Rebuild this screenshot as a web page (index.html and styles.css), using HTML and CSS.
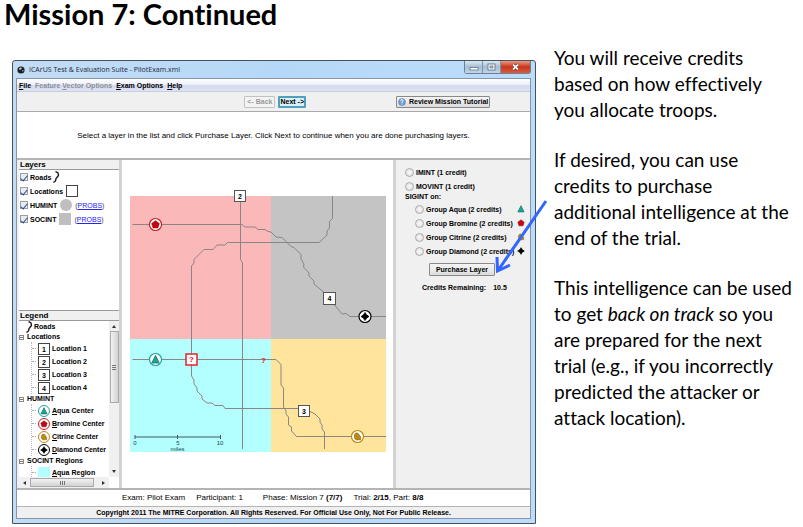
FILE: index.html
```html
<!DOCTYPE html>
<html lang="en">
<head>
<meta charset="utf-8">
<title>Mission 7: Continued</title>
<link rel="stylesheet" href="styles.css">
</head>
<body>
<svg class="defs" aria-hidden="true">
  <symbol id="aqua" viewBox="-6 -6 12 12"><path d="M0-4 3.700 3.500H-3.700Z" fill="#1aa69c" stroke="#14695f" stroke-width=".8"/></symbol>
  <symbol id="bromine" viewBox="-6 -6 12 12"><path d="M0-3.800 3.800-1 2.400 3.400H-2.400L-3.800-1Z" fill="#c40812" stroke="#8b0008" stroke-width=".6"/></symbol>
  <symbol id="citrine" viewBox="-6 -6 12 12"><path d="M-2.800-2.200C-2-4 1-4 1.500-1.500 3-.5 3.800 1 3 3.200L-1 3.400C-3 3-3.600 0-2.800-2.200Z" fill="#bd8a10" stroke="#7d5908" stroke-width=".6"/></symbol>
  <symbol id="diamond" viewBox="-6 -6 12 12"><path d="M0-4 1.600-1.600 4 0 1.600 1.600 0 4-1.600 1.600-4 0-1.600-1.600Z" fill="#000" stroke="#000" stroke-width=".8"/></symbol>
  <symbol id="road" viewBox="0 0 8 12"><path d="M3.500.5 6 2 6.500 4.500 4 7.500 3.500 10 1.500 11.500" fill="none" stroke="#111" stroke-width="1.300"/></symbol>
</svg>
<main class="slide">
  <h1 class="slide-title">Mission 7: Continued</h1>

  <section class="window">
    <header class="titlebar">
      <svg class="app-icon" viewBox="0 0 8 8"><circle cx="4" cy="4" r="3.600" fill="#1b1f25"/><path d="M2 2.500Q3.500 1 5 2L4 3.500 2.500 4ZM5 4.500 6.500 4 6 6Z" fill="#b9c8d6"/></svg>
      <span class="app-title">ICArUS Test &amp; Evaluation Suite - PilotExam.xml</span>
      <div class="window-buttons">
        <button class="win-btn" aria-label="Minimize"><svg viewBox="0 0 16 12"><rect x="4.500" y="6.500" width="8" height="2.500" fill="#fff" stroke="#59687a" stroke-width=".7"/></svg></button>
        <button class="win-btn" aria-label="Maximize"><svg viewBox="0 0 16 12"><rect x="4.500" y="3" width="7" height="6" fill="#fff" stroke="#59687a" stroke-width=".8"/><rect x="6.500" y="5" width="3" height="2" fill="#b5cbe0" stroke="#59687a" stroke-width=".7"/></svg></button>
        <button class="win-btn close" aria-label="Close"><svg viewBox="0 0 30 12"><path d="M12.500 3.500 17.500 8.500M17.500 3.500 12.500 8.500" stroke="#6b3030" stroke-width="3"/><path d="M12.500 3.500 17.500 8.500M17.500 3.500 12.500 8.500" stroke="#fff" stroke-width="1.800"/></svg></button>
      </div>
    </header>

    <div class="client">
      <nav class="menubar">
        <button><u>F</u>ile</button>
        <button disabled>Feature <u>V</u>ector Options</button>
        <button><u>E</u>xam Options</button>
        <button><u>H</u>elp</button>
      </nav>
      <div class="toolbar">
        <div class="steps">
          <button class="btn" disabled>&lt;- Back</button>
          <button class="btn next">Next -&gt;</button>
        </div>
        <button class="btn review"><svg viewBox="0 0 8 8"><circle cx="4" cy="4" r="3.500" fill="#6f9fd4" stroke="#4576b0" stroke-width=".5"/><path d="M2.800 3.100Q3-.1 5.200 2.300 5 3.500 4 4V5M4 5.700V6.500" fill="none" stroke="#fff" stroke-width=".9"/></svg>Review Mission Tutorial</button>
      </div>
      <p class="message">Select a layer in the list and click Purchase Layer. Click Next to continue when you are done purchasing layers.</p>

      <div class="workspace">
        <aside class="sidebar">
          <section class="layers">
            <h2>Layers</h2>
            <div class="layer"><label><input type="checkbox" checked>Roads</label><svg class="road-key"><use href="#road"/></svg></div>
            <div class="layer"><label><input type="checkbox" checked>Locations</label><i class="key outline"></i></div>
            <div class="layer"><label><input type="checkbox" checked>HUMINT</label><i class="key round"></i><span class="probs">(<a href="#humint">PROBS</a>)</span></div>
            <div class="layer"><label><input type="checkbox" checked>SOCINT</label><i class="key"></i><span class="probs">(<a href="#socint">PROBS</a>)</span></div>
          </section>
          <section class="legend">
            <h2>Legend</h2>
            <div class="legend-body">
              <ul class="tree">
                <li class="top-leaf"><svg class="road-key"><use href="#road"/></svg>Roads</li>
                <li><button class="toggle" aria-label="Collapse Locations"></button>Locations
                  <ul>
                    <li><b class="num">1</b>Location 1</li>
                    <li><b class="num">2</b>Location 2</li>
                    <li><b class="num">3</b>Location 3</li>
                    <li><b class="num">4</b>Location 4</li>
                  </ul>
                </li>
                <li><button class="toggle" aria-label="Collapse HUMINT"></button>HUMINT
                  <ul>
                    <li><svg class="center aqua"><use href="#aqua"/></svg><span><u>A</u>qua Center</span></li>
                    <li><svg class="center bromine"><use href="#bromine"/></svg><span><u>B</u>romine Center</span></li>
                    <li><svg class="center citrine"><use href="#citrine"/></svg><span><u>C</u>itrine Center</span></li>
                    <li><svg class="center diamond"><use href="#diamond"/></svg><span><u>D</u>iamond Center</span></li>
                  </ul>
                </li>
                <li><button class="toggle" aria-label="Collapse SOCINT Regions"></button>SOCINT Regions
                  <ul>
                    <li><i class="swatch"></i><span><u>A</u>qua Region</span></li>
                  </ul>
                </li>
              </ul>
              <div class="vscroll"><i class="arrow up"></i><i class="thumb"></i><i class="arrow down"></i></div>
              <div class="hscroll"><i class="arrow left"></i><i class="thumb"></i><i class="arrow right"></i></div>
            </div>
          </section>
        </aside>

        <svg class="map" viewBox="122 160 271 328" role="img" aria-label="Mission map">
          <rect x="130" y="196" width="141" height="143" fill="#fbb8b9"/>
          <rect x="271" y="196" width="115" height="143" fill="#c4c4c4"/>
          <rect x="130" y="339" width="141" height="113" fill="#b3ffff"/>
          <rect x="271" y="339" width="115" height="113" fill="#ffe49c"/>
          <g class="roads">
            <path d="M132.500 224.500H242L245 227H255L258 229.500H265L268 231.500 271 232 276 237 282 237.500 291 246.500 294 247.500 301 254.500V259L304 264 303.500 267 309 273V276L314 281V284L324 292.500 329 298 342 314 346 313.500 350 316.500H386"/>
            <path d="M332.500 196V218.500L329.500 221.500V228L327 231V235L319 242.500H227.500L225 245H217L213 249.500H204L194 259.500V263L191.500 266V376L194 380V384L197 388V391L202 396V399L207 403H212L215 405.500H223L225 408.500H304L311 412 315 414 320 419V422L322 425V429L324.500 432V449"/>
            <path d="M240.500 196V259.500L242.500 263V449"/>
            <path d="M132.500 359.500H276L281 364.500V385L283.500 388V407L286 411V414L288.500 417V425L291.500 427V431L296.500 436.500H386"/>
            <path class="scale" d="M135 437H220.500M135 435V439M177.500 435V439M220.500 435V439"/>
          </g>
          <g class="scale-text">
            <text x="135" y="445">0</text><text x="178" y="445">5</text><text x="220" y="445">10</text><text x="177.500" y="451">miles</text>
          </g>
          <g class="markers">
            <rect x="234.500" y="190.500" width="11" height="11"/><text x="240" y="199">2</text>
            <rect x="323.500" y="292.500" width="12" height="12"/><text x="329.500" y="301">4</text>
            <rect x="298.500" y="405.500" width="11" height="11"/><text x="304" y="414">3</text>
          </g>
          <g class="markers unknown">
            <rect x="186" y="354" width="11" height="11"/><text x="191.500" y="362">?</text>
            <text x="263.500" y="363">?</text>
          </g>
          <g class="centers">
            <circle cx="155.500" cy="224.500" r="6" stroke="#c4202a"/><use href="#bromine" x="149.500" y="218.500" width="12" height="12"/>
            <circle cx="365" cy="316.500" r="6" stroke="#000"/><use href="#diamond" x="359" y="310.500" width="12" height="12"/>
            <circle cx="155.500" cy="359.500" r="6" stroke="#1aa6a0"/><use href="#aqua" x="149.500" y="353.500" width="12" height="12"/>
            <circle cx="357.500" cy="436.500" r="6" stroke="#bd8a10"/><use href="#citrine" x="351.500" y="430.500" width="12" height="12"/>
          </g>
        </svg>

        <aside class="purchase">
          <label><input type="radio" name="layer">IMINT (1 credit)</label>
          <label><input type="radio" name="layer">MOVINT (1 credit)</label>
          <fieldset>
            <legend>SIGINT on:</legend>
            <label><input type="radio" name="layer">Group Aqua (2 credits)<svg><use href="#aqua"/></svg></label>
            <label><input type="radio" name="layer">Group Bromine (2 credits)<svg><use href="#bromine"/></svg></label>
            <label><input type="radio" name="layer">Group Citrine (2 credits)<svg><use href="#citrine"/></svg></label>
            <label><input type="radio" name="layer">Group Diamond (2 credits)<svg><use href="#diamond"/></svg></label>
          </fieldset>
          <button class="btn buy">Purchase Layer</button>
          <p class="credits"><span>Credits Remaining:</span><span>10.5</span></p>
          <svg class="pointer" viewBox="0 0 56 78" aria-hidden="true"><path d="M53 4 6 72M4 60 4.500 74 17 68" fill="none" stroke="#3366ff" stroke-width="3"/></svg>
        </aside>
      </div>

      <div class="status">
        <span>Exam: Pilot Exam</span><span>Participant: 1</span><span class="phase">Phase: Mission 7 <b>(7/7)</b></span><span>Trial: <b>2/15</b>, Part: <b>8/8</b></span>
      </div>
      <footer class="copyright">Copyright 2011 The MITRE Corporation. All Rights Reserved. For Official Use Only, Not For Public Release.</footer>
    </div>
  </section>

  <section class="notes">
    <p>You will receive credits<br>based on how effectively<br>you allocate troops.</p>
    <p>If desired, you can use<br>credits to purchase<br>additional intelligence at the<br>end of the trial.</p>
    <p>This intelligence can be used<br>to get <em>back on track</em> so you<br>are prepared for the next<br>trial (e.g., if you incorrectly<br>predicted the attacker or<br>attack location).</p>
  </section>
</main>
</body>
</html>
```
FILE: styles.css
```css
* { box-sizing: border-box; }

body {
  margin: 0;
  background: #fff;
  color: #000;
  font-family: "Liberation Sans", Arial, sans-serif;
}

h1, h2, p, ul, fieldset, legend { margin: 0; padding: 0; border: 0; }
ul { list-style: none; }
button { font: inherit; color: inherit; padding: 0; border: 0; background: none; }
i { display: block; }
.defs { position: absolute; width: 0; height: 0; }

.slide {
  display: grid;
  grid-template-columns: minmax(0, 1fr) 249px;
  column-gap: 18px;
  align-items: start;
  padding-left: 12px;
  font-variant-ligatures: none;
}

.slide-title {
  grid-column: 1 / -1;
  height: 60px;
  margin-left: -8px;
  font-family: Lato, sans-serif;
  font-size: 29px;
  line-height: 28px;
}

/* Application window */
.window {
  font-size: 7px;
  font-weight: bold;
  padding: 0 4px 4px 3px;
  border: 1px solid #47525f;
  border-radius: 3px 3px 0 0;
  background: linear-gradient(90deg, #c3dcf5, #b6d8f8 50%, #bcdcfb);
}

.titlebar {
  display: flex;
  align-items: center;
  gap: 4px;
  height: 17px;
  padding-left: 1px;
}
.app-icon { width: 8px; height: 8px; }
.app-title { flex: 1; font: 7px/12px "Open Sans", sans-serif; color: #1b2836; }
.window-buttons {
  display: flex;
  align-self: flex-start;
  border: 1px solid #6c7f94;
  border-top: 0;
  border-radius: 0 0 3px 3px;
}
.win-btn { width: 18px; height: 12px; border-right: 1px solid #7f92a6; background: linear-gradient(#dbe8f5, #a5bdd5 50%, #c0d6ea); }
.win-btn svg { display: block; width: 100%; height: 12px; }
.win-btn.close { width: 29px; border: 0; background: linear-gradient(#e99a85, #c8351c 50%, #d8603e); }

.client { border: 1px solid #8795a6; background: #fff; }

.menubar {
  display: flex;
  gap: 4px;
  height: 13px;
  padding-left: 2px;
  border-bottom: 1px solid #c9cede;
  background: linear-gradient(#fff, #eef0f9 45%, #d5daee 55%, #dfe3f5);
}
.menubar button:disabled { color: #8d8f97; }

.toolbar {
  display: grid;
  grid-template-columns: 289px 1fr;
  column-gap: 90px;
  align-items: center;
  height: 20px;
  border-bottom: 1px solid #aaa;
  background: #f0f0f0;
}
.steps { display: flex; justify-content: flex-end; gap: 3px; }
.btn {
  height: 12px;
  padding: 0 5px;
  border: 1px solid #8a8a8a;
  border-radius: 1px;
  background: linear-gradient(#f4f4f4, #ececec 50%, #dadada);
}
.btn:disabled { color: #999; border-color: #c2c2c2; background: #f4f4f4; padding: 0 2px; }
.btn.next { padding: 0; border: 2px solid #4f9fbd; background: #dceef7; line-height: 8px; }
.btn.review { display: flex; align-items: center; justify-self: start; gap: 3px; padding: 0 1px; }
.btn.review svg { width: 8px; height: 8px; }

.message {
  height: 46px;
  font-size: 8px;
  font-weight: normal;
  line-height: 48px;
  text-align: center;
}

.workspace {
  display: grid;
  grid-template-columns: 105px minmax(0, 1fr) 137px;
  border: solid #b4b4b4;
  border-width: 2px 0;
}

/* Layers and legend */
.sidebar {
  display: grid;
  grid-template-rows: 150px 1fr;
  padding-left: 2px;
  border-right: 3px solid #d2d2d2;
  background: #f0f0f0;
}
.layers, .legend-body { background: #fff; }
.sidebar h2 {
  height: 10px;
  padding-left: 1px;
  border-bottom: 1px solid #999;
  background: #f0f0f0;
  font-size: 8px;
  line-height: 10px;
}
.layer { display: flex; align-items: center; height: 14px; padding-left: 1px; }
.layer label { display: flex; align-items: center; gap: 2px; }
input { appearance: none; flex: none; margin: 0; }
input[type="checkbox"] {
  display: grid;
  place-items: center;
  width: 8px;
  height: 8px;
  border: 1px solid #9a9fa6;
  background: #e8ecf2;
}
input[type="checkbox"]:checked::after {
  content: "";
  width: 3px;
  height: 6px;
  border: solid #2d4a8c;
  border-width: 0 1px 1px 0;
  transform: rotate(40deg);
}
.road-key { width: 8px; height: 12px; margin-left: 1px; }
.key { width: 12px; height: 12px; margin: 0 3px; background: #bfbfbf; }
.key.round { border-radius: 50%; }
.key.outline { border: 1px solid #444; background: #fff; }
.probs { font-weight: normal; color: #444; }
.probs a { color: #22f; }

.legend { display: grid; grid-template-rows: 10px 1fr; border-top: 1px solid #999; }
.legend-body { display: grid; grid-template-columns: minmax(0, 1fr) 10px; grid-template-rows: 156px 11px; }
.tree { overflow: hidden; white-space: nowrap; line-height: 10px; }
.tree .top-leaf { display: flex; align-items: center; height: 11px; padding-left: 5px; gap: 1px; }
.toggle {
  display: inline-block;
  width: 5px;
  height: 5px;
  margin-right: 3px;
  border: 1px solid #888;
  background: linear-gradient(#777, #777) center / 3px 1px no-repeat;
  vertical-align: 0;
}
.tree ul { margin-left: 12px; border-left: 1px dotted #bbb; }
.tree ul li { display: flex; align-items: center; gap: 2px; height: 13px; }
.tree ul li::before { content: ""; width: 4px; border-top: 1px dotted #aaa; }
.tree ul .num { width: 12px; height: 12px; border: 1px solid #444; text-align: center; line-height: 11px; }
.center { width: 12px; height: 12px; border: 1px solid; border-radius: 50%; }
.center.aqua { color: #1aa6a0; }
.center.bromine { color: #c4202a; }
.center.citrine { color: #bd8a10; }
.center.diamond { color: #000; }
.tree span { color: #000; }
.swatch { width: 12px; height: 12px; background: #b3ffff; }

.vscroll, .hscroll { display: flex; align-items: center; background: #f0f0f0; }
.vscroll { flex-direction: column; padding: 4px 0; }
.vscroll .thumb {
  width: 9px;
  height: 72px;
  margin: 3px 0 auto;
  border: 1px solid #aaa;
  background: linear-gradient(#777 1px, transparent 1px 2px, #777 2px 3px, transparent 3px 4px, #777 4px) center / 4px 5px no-repeat, linear-gradient(90deg, #f2f2f2, #d2d2d2);
}
.hscroll { padding: 0 4px; }
.hscroll .thumb {
  width: 64px;
  height: 9px;
  margin: 0 auto 0 4px;
  border: 1px solid #aaa;
  background: linear-gradient(90deg, #777 1px, transparent 1px 2px, #777 2px 3px, transparent 3px 4px, #777 4px) center / 5px 4px no-repeat, linear-gradient(#f2f2f2, #d2d2d2);
}
.arrow { border: 2px solid transparent; }
.arrow.up { border-top: 0; border-bottom: 3px solid #333; }
.arrow.down { border-bottom: 0; border-top: 3px solid #333; }
.arrow.left { border-left: 0; border-right: 3px solid #333; }
.arrow.right { border-right: 0; border-left: 3px solid #333; }

/* Map */
.map { display: block; width: 100%; background: #fff; }
.roads { fill: none; stroke: #8b8585; stroke-width: 1; }
.roads .scale { stroke: #456; }
.map text { text-anchor: middle; }
.scale-text { font-size: 6px; font-weight: normal; fill: #244; }
.markers rect { fill: #fff; stroke: #555; }
.markers text { font-size: 7px; }
.unknown rect { stroke: #e8202a; stroke-width: 1.5; }
.unknown text { fill: #e8101a; font-size: 8px; }
.centers circle { fill: #fff; stroke-width: 1.2; }

/* Purchase panel */
.purchase {
  position: relative;
  padding: 5px 0 0 9px;
  border-left: 3px solid #d2d2d2;
  background: #f0f0f0;
  white-space: nowrap;
}
.purchase label { display: flex; align-items: center; gap: 2px; height: 14px; }
.purchase legend { height: 9px; line-height: 8px; }
.purchase fieldset label { padding-left: 10px; }
.purchase label svg { flex: none; width: 10px; height: 10px; margin: 0 8px 0 auto; }
input[type="radio"] { width: 9px; height: 9px; border: 1px solid #aaa; border-radius: 50%; background: radial-gradient(#f8f8f8, #ddd); }
.btn.buy { display: block; height: 13px; width: 66px; margin: 5px 0 0 24px; }
.credits { display: flex; gap: 7px; margin: 8px 0 0 17px; }
.pointer { position: absolute; top: 37px; right: -19px; width: 56px; height: 78px; }

.status {
  display: flex;
  gap: 11px;
  height: 17px;
  padding-left: 105px;
  border-bottom: 1px solid #b4b4b4;
  font-size: 8px;
  font-weight: normal;
  line-height: 16px;
}
.status .phase { margin-left: 9px; }
.copyright { height: 11px; background: #f0f0f0; text-align: center; line-height: 11px; }

/* Explanatory notes */
.notes {
  margin-top: -15px;
  font-family: Lato, sans-serif;
  font-size: 19px;
  line-height: 26px;
  white-space: nowrap;
}
.notes p + p { margin-top: 24px; }
```
